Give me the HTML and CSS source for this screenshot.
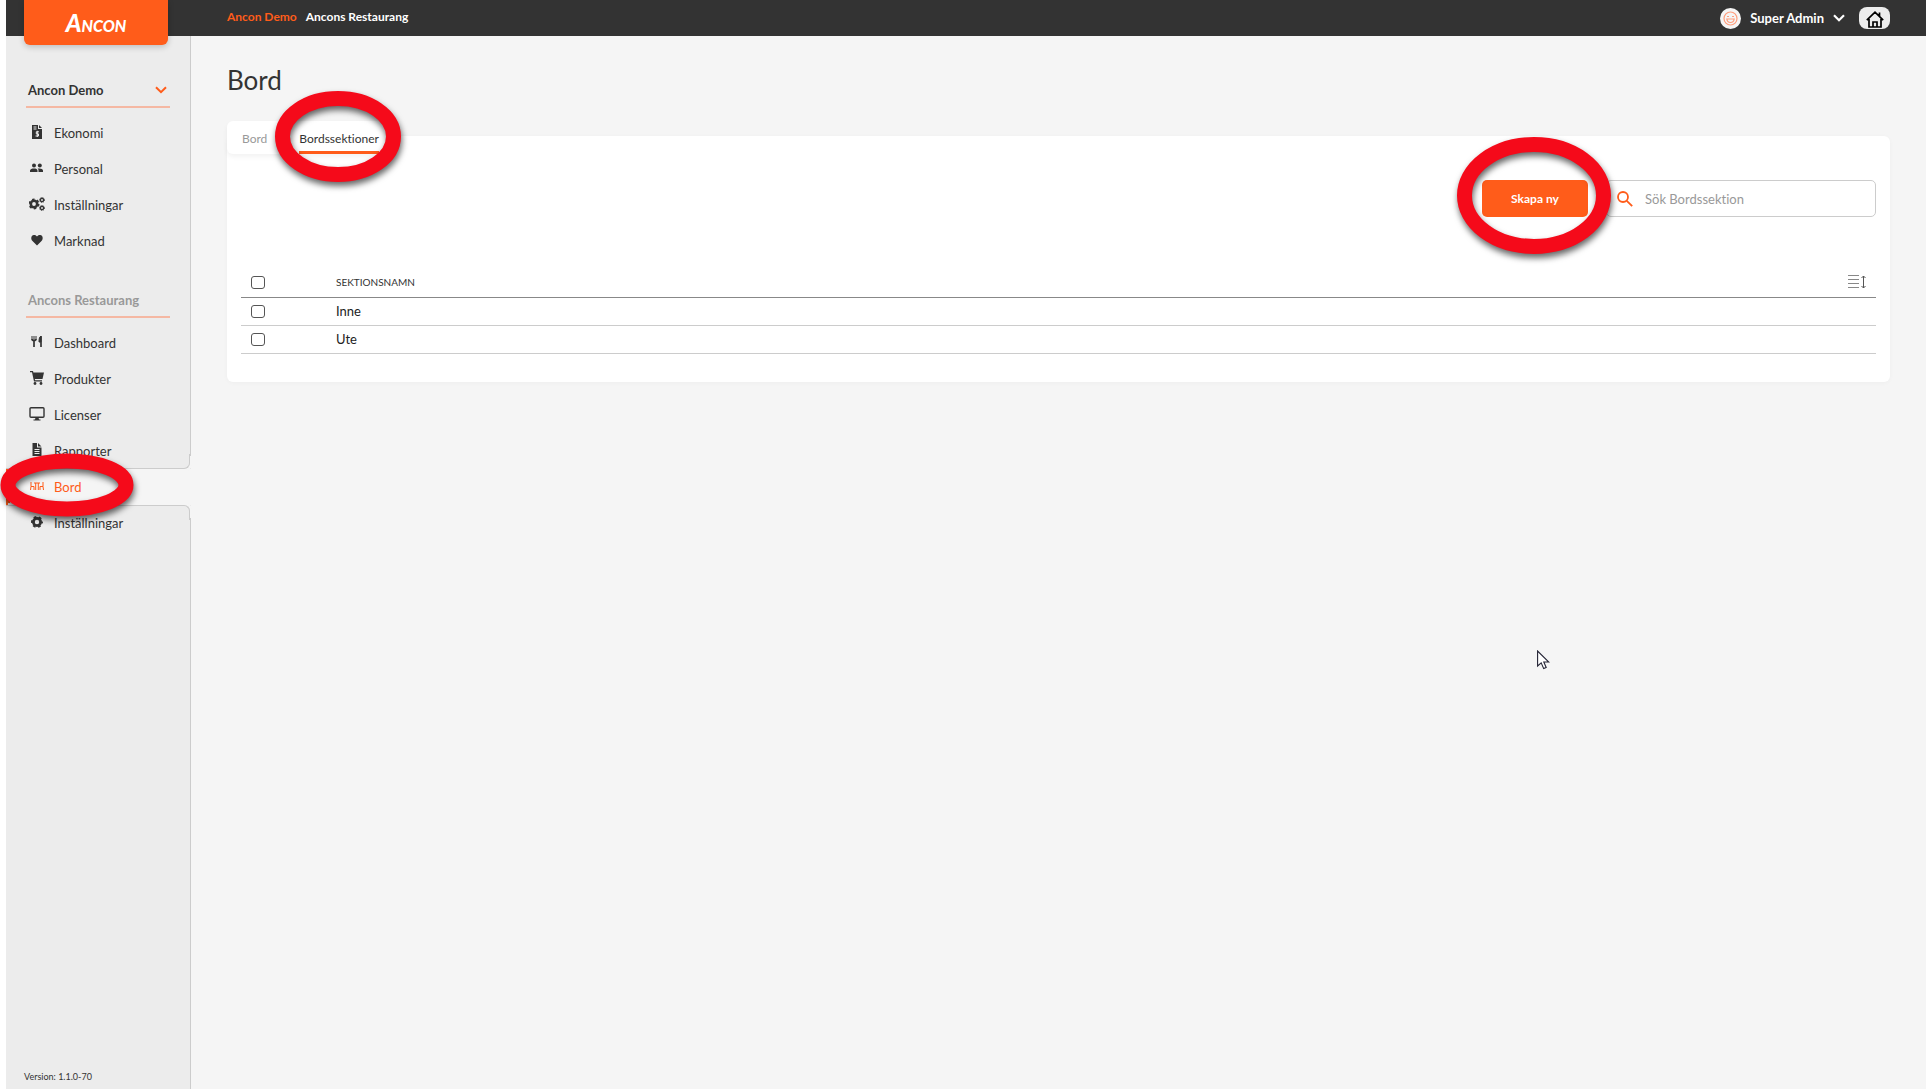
FILE: index.html
```html
<!DOCTYPE html>
<html lang="sv">
<head>
<meta charset="utf-8">
<meta name="viewport" content="width=device-width, initial-scale=1">
<title>Bord</title>
<link rel="stylesheet" href="styles.css">
</head>
<body>
<header class="topbar">
  <a class="logo" href="#"><span class="logo-first">A</span>NCON</a>
  <nav class="crumbs">
    <a class="crumb crumb-root" href="#">Ancon Demo</a>
    <a class="crumb" href="#">Ancons Restaurang</a>
  </nav>
  <div class="account">
    <button class="user" type="button">
      <span class="avatar"><svg width="15" height="15" viewBox="0 0 15 15" fill="none" stroke="#ff9d7c" stroke-width="1.2"><circle cx="7.500" cy="7.500" r="6.500"/><path d="M4 5.500h2M9 5.500h2M3.800 8h7.400c-.3 2.300-1.900 3.500-3.700 3.500S4.100 10.300 3.800 8z"/></svg></span>
      Super Admin
      <svg class="user-arrow" width="12" height="8" viewBox="0 0 12 8" fill="none" stroke="#fff" stroke-width="2.200"><path d="M1 1.200l5 5 5-5"/></svg>
    </button>
    <button class="home" type="button" aria-label="Hem">
      <svg width="18" height="17" viewBox="0 0 18 17" fill="none" stroke="#000" stroke-width="1.700"><path d="M.8 9.200L9 1.200l8.200 8M3 8v8h12V8M7 16v-5h4v5M13.500 5V1.500"/></svg>
    </button>
  </div>
</header>
<div class="layout">
  <aside class="sidebar">
    <button class="group group-open" type="button">Ancon Demo
      <svg width="12" height="8" viewBox="0 0 12 8" fill="none" stroke="#ff5c1a" stroke-width="2"><path d="M1 1.200l5 5 5-5"/></svg>
    </button>
    <ul class="menu">
      <li><a class="item" href="#"><svg class="icon" viewBox="0 0 16 16"><path fill="#333" d="M3 1h6v4h4v10H3z"/><path fill="#333" d="M10 1l3 3h-3z"/><path stroke="#ececec" fill="none" d="M4.500 3h3M4.500 5h3M10 7.800H7.300v2.100H9.500V12H6.500M8.300 6.800v6.200"/></svg>Ekonomi</a></li>
      <li><a class="item" href="#"><svg class="icon" viewBox="0 0 16 16" fill="#333"><circle cx="5" cy="5.500" r="2"/><circle cx="10.800" cy="5.500" r="2"/><path d="M1 12V10.500C1 9 3 8.400 5 8.400s3.500.6 3.500 2.100V12zM9.500 12v-1.500c0-.8-.3-1.400-.9-1.900 2.500-.6 5.400 0 5.400 1.900V12z"/></svg>Personal</a></li>
      <li><a class="item" href="#"><svg class="icon" viewBox="0 0 16 16" fill="none" stroke="#333"><circle cx="5" cy="8" r="3.200" stroke-width="2.600"/><circle cx="5" cy="8" r="4.600" stroke-width="1.800" stroke-dasharray="2.400 2.400"/><circle cx="13" cy="4" r="1.600" stroke-width="1.400"/><circle cx="13" cy="12" r="1.600" stroke-width="1.400"/><circle cx="13" cy="4" r="2.500" stroke-dasharray="1 1"/><circle cx="13" cy="12" r="2.500" stroke-dasharray="1 1"/></svg>Inställningar</a></li>
      <li><a class="item" href="#"><svg class="icon" viewBox="0 0 16 16" fill="#333"><path d="M8 13.500L3.500 9C1.500 7 2 3.500 4.800 3 6.200 2.800 7.300 3.500 8 4.500 8.700 3.500 9.800 2.800 11.200 3c2.800.5 3.300 4 1.300 6z"/></svg>Marknad</a></li>
    </ul>
    <div class="group group-site">Ancons Restaurang</div>
    <ul class="menu">
      <li><a class="item" href="#"><svg class="icon" viewBox="0 0 16 16" fill="none" stroke="#333"><path d="M3 2v3.500M5 2v4M7 2v3.500" /><path stroke-width="1.700" d="M3 5c0 2 4 2 4 0M5 6.500V13"/><path fill="#333" d="M12 2.500c-1.500 0-2 2-2 5.500h2z"/><path stroke-width="1.700" d="M12 2v11"/></svg>Dashboard</a></li>
      <li><a class="item" href="#"><svg class="icon" viewBox="0 0 16 16" fill="#333"><path d="M1 1h3l.4 1.500H15L13.500 9H5.800l.3 1.300H13v1.200H5L3 2.300H1z"/><circle cx="6" cy="13.500" r="1.400"/><circle cx="12" cy="13.500" r="1.400"/></svg>Produkter</a></li>
      <li><a class="item" href="#"><svg class="icon" viewBox="0 0 16 16"><rect x="1" y="1.800" width="14" height="9.500" rx="1" fill="none" stroke="#333" stroke-width="1.400"/><path fill="#333" d="M6.500 11.500h3l.5 2h1.500v1h-7v-1H6z"/></svg>Licenser</a></li>
      <li><a class="item" href="#"><svg class="icon" viewBox="0 0 16 16"><path fill="#333" d="M3.500 1H8v4.500h4.500V14h-9zM9 1l3.500 3.500H9z"/><path stroke="#ececec" d="M5.500 7.500h5M5.500 9.500h5M5.500 11.500h5"/></svg>Rapporter</a></li>
      <li class="current"><a class="item" href="#" aria-current="page"><svg class="icon" viewBox="0 0 16 16" fill="none" stroke="#ff5c1a"><path d="M2 4v4.500h3V12M2 8.500L1.500 12M5 5h6M6.700 5v7M9.300 5v7M14 4v4.500h-3V12M14 8.500l.5 3.500"/></svg>Bord</a>
        <svg class="ring ring-menu" width="134" height="64"><ellipse cx="67" cy="32" rx="59" ry="24"/></svg></li>
      <li><a class="item" href="#"><svg class="icon" viewBox="0 0 16 16" fill="none" stroke="#333"><circle cx="8" cy="8" r="3.600" stroke-width="2.800"/><circle cx="8" cy="8" r="5" stroke-width="2" stroke-dasharray="2.600 2.636" stroke-dashoffset="1.300"/></svg>Inställningar</a></li>
    </ul>
    <p class="version">Version: 1.1.0-70</p>
  </aside>
  <main class="main">
    <h1 class="title">Bord</h1>
    <nav class="tabs">
      <a class="tab" href="#">Bord</a>
      <span class="tab-holder"><a class="tab tab-current" href="#" aria-current="page">Bordssektioner</a>
        <svg class="ring ring-tab" width="126" height="91"><ellipse cx="63" cy="45.500" rx="55.500" ry="38"/></svg></span>
    </nav>
    <section class="card">
      <div class="tools">
        <span class="create-holder"><button class="create" type="button">Skapa ny</button>
          <svg class="ring ring-create" width="154" height="117"><ellipse cx="77" cy="58.500" rx="69.500" ry="51"/></svg></span>
        <label class="search">
          <svg width="16" height="16" viewBox="0 0 16 16" fill="none" stroke="#ff5c1a" stroke-width="1.800"><circle cx="6" cy="6" r="5"/><path d="M9.800 9.800l5.400 5.400"/></svg>
          <input class="search-input" type="text" placeholder="Sök Bordssektion" aria-label="Sök Bordssektion">
        </label>
      </div>
      <table class="sections">
        <thead>
          <tr><th class="pick"><input class="tick" type="checkbox" aria-label="Markera alla"></th><th>SEKTIONSNAMN</th>
            <th class="sort"><button class="sort-button" type="button" aria-label="Sortera"><svg width="18" height="14" viewBox="0 0 18 14" fill="none" stroke="#888"><path d="M0 .5h11M0 4.500h11M0 8.500h11M0 12.500h11"/><path stroke="#555" d="M15.500 1v12M13.500 3l2-2 2 2M13.500 11l2 2 2-2"/></svg></button></th></tr>
        </thead>
        <tbody>
          <tr><td class="pick"><input class="tick" type="checkbox" aria-label="Markera Inne"></td><td colspan="2">Inne</td></tr>
          <tr><td class="pick"><input class="tick" type="checkbox" aria-label="Markera Ute"></td><td colspan="2">Ute</td></tr>
        </tbody>
      </table>
    </section>
  </main>
</div>
<svg class="cursor" width="13" height="20" viewBox="0 0 13 20"><path d="M.6 1v15l3.600-3.200 2.500 5.800 2.500-1.100-2.400-5.500h5z" fill="#fff" stroke="#223" stroke-width="1.100"/></svg>
</body>
</html>
```
FILE: styles.css
```css
* { box-sizing: border-box; }

body {
  margin: 0;
  padding-left: 6px;
  min-height: 100vh;
  display: flex;
  flex-direction: column;
  position: relative;
  background: #fff;
  color: #333;
  font: 13px/18px Lato, "Liberation Sans", sans-serif;
  font-variant-ligatures: none;
}

a { color: inherit; text-decoration: none; }
button { font: inherit; color: inherit; border: 0; background: none; padding: 0; cursor: pointer; }
svg { display: block; flex: none; }

.topbar {
  display: flex;
  align-items: flex-start;
  height: 36px;
  padding: 0 36px 0 18px;
  background: #333;
  color: #fff;
}
.logo {
  width: 144px;
  height: 45px;
  flex: none;
  position: relative;
  z-index: 1;
  border-radius: 0 0 6px 6px;
  background: #ff5c1a;
  box-shadow: 0 2px 6px rgba(0, 0, 0, .2);
  text-align: center;
  font: italic 900 16px/45px Lato, sans-serif;
}
.logo-first { font-size: 24px; }
.crumbs { display: flex; gap: 9px; margin-left: 59px; padding-top: 8px; font-size: 12px; font-weight: bold; }
.crumb-root { color: #ff5c1a; }
.account { display: flex; align-items: center; gap: 14px; margin-left: auto; height: 36px; }
.user { display: flex; align-items: center; gap: 9px; font-weight: bold; }
.avatar { display: grid; place-items: center; width: 21px; height: 21px; border-radius: 50%; background: #f5f5f5; }
.home { display: grid; place-items: center; width: 31px; height: 22px; padding-top: 3px; border-radius: 8px; background: #ececec; }

.layout { display: flex; flex: 1; }

.sidebar {
  display: flex;
  flex-direction: column;
  width: 185px;
  flex: none;
  padding-top: 37px;
  background: #ececec;
  border-right: 1px solid #ccc;
}
.group {
  display: flex;
  align-items: center;
  justify-content: space-between;
  height: 35px;
  margin: 0 20px;
  padding: 0 3px 0 2px;
  border-bottom: 2px solid #f5b8a3;
  font-weight: bold;
}
.group-site { margin-top: 24px; color: #999; }
.menu { list-style: none; margin: 0; padding: 7px 0 0; }
.menu li { height: 36px; }
.item { display: flex; align-items: center; gap: 9px; height: 36px; padding-left: 23px; }
.icon { width: 16px; height: 16px; margin-top: -3px; }
.menu .current {
  position: relative;
  margin-right: -1px;
  background: #f5f5f5;
  color: #ff5c1a;
  box-shadow: inset 4px 0 #ff5c1a;
}
/* curved sidebar edge above and below the current item */
.current::before,
.current::after {
  content: "";
  position: absolute;
  left: 0;
  right: 1px;
  height: 14px;
  border: 0 solid #ccc;
  border-right-width: 1px;
}
.current::before {
  bottom: 100%;
  border-bottom-width: 1px;
  border-radius: 0 0 6px 0;
  box-shadow: 2px 2px 0 #f5f5f5;
}
.current::after {
  top: 100%;
  border-top-width: 1px;
  border-radius: 0 6px 0 0;
  box-shadow: 2px -2px 0 #f5f5f5;
}
.version { margin: auto 0 0 18px; padding-bottom: 3px; font-size: 9px; }

.main { flex: 1; padding: 28px 36px 0; background: #f5f5f5; }
.title { margin: 0; font-size: 26px; line-height: 32px; font-weight: normal; }
.tabs {
  display: flex;
  gap: 32px;
  width: max-content;
  height: 33px;
  margin-top: 25px;
  padding: 0 15px;
  position: relative;
  z-index: 1;
  border-radius: 6px;
  background: #fff;
  box-shadow: 0 3px 5px rgba(0, 0, 0, .05);
  font-size: 12px;
}
.tab { display: block; height: 33px; line-height: 36px; color: #999; }
.tab-current { color: #333; border-bottom: 3px solid #ff5c1a; }
.tab-holder, .create-holder { position: relative; }

.card {
  margin-top: -18px;
  padding: 44px 14px 28px;
  border-radius: 6px;
  background: #fff;
  box-shadow: 0 1px 5px rgba(0, 0, 0, .03);
}
.tools { display: flex; justify-content: flex-end; gap: 18px; }
.create { width: 106px; height: 37px; border-radius: 5px; background: #ff5c1a; color: #fff; font-size: 12px; font-weight: bold; }
.search {
  display: flex;
  align-items: center;
  gap: 12px;
  width: 270px;
  height: 37px;
  padding: 0 10px;
  border: 1px solid #ccc;
  border-radius: 5px;
}
.search-input { flex: 1; min-width: 0; border: 0; padding: 0; outline: 0; font: inherit; }
.search-input::placeholder { color: #999; }

.sections { width: 100%; margin-top: 48px; border-collapse: collapse; }
.sections th { height: 32px; padding: 3px 0 0; border-bottom: 1px solid #888; text-align: left; font-size: 10px; font-weight: normal; }
.sections td { height: 28px; padding: 0; border-bottom: 1px solid #ccc; color: #222; }
.sections .pick { width: 95px; padding-left: 10px; }
.sections .sort { width: 28px; }
.sort-button { display: block; }
.tick {
  appearance: none;
  display: block;
  width: 14px;
  height: 13px;
  margin: 0;
  border: 1px solid #555;
  border-radius: 3px;
  background: #fff;
}

.ring {
  position: absolute;
  z-index: 2;
  overflow: visible;
  pointer-events: none;
  fill: none;
  stroke: #f50a1a;
  stroke-width: 15px;
  filter: drop-shadow(1px 4px 3px rgba(0, 0, 0, .6));
}
.ring-menu { left: -6px; top: -16px; }
.ring-tab { left: -24px; top: -30px; }
.ring-create { left: -25px; top: -43px; }
.cursor { position: absolute; left: 1537px; top: 650px; }
```
